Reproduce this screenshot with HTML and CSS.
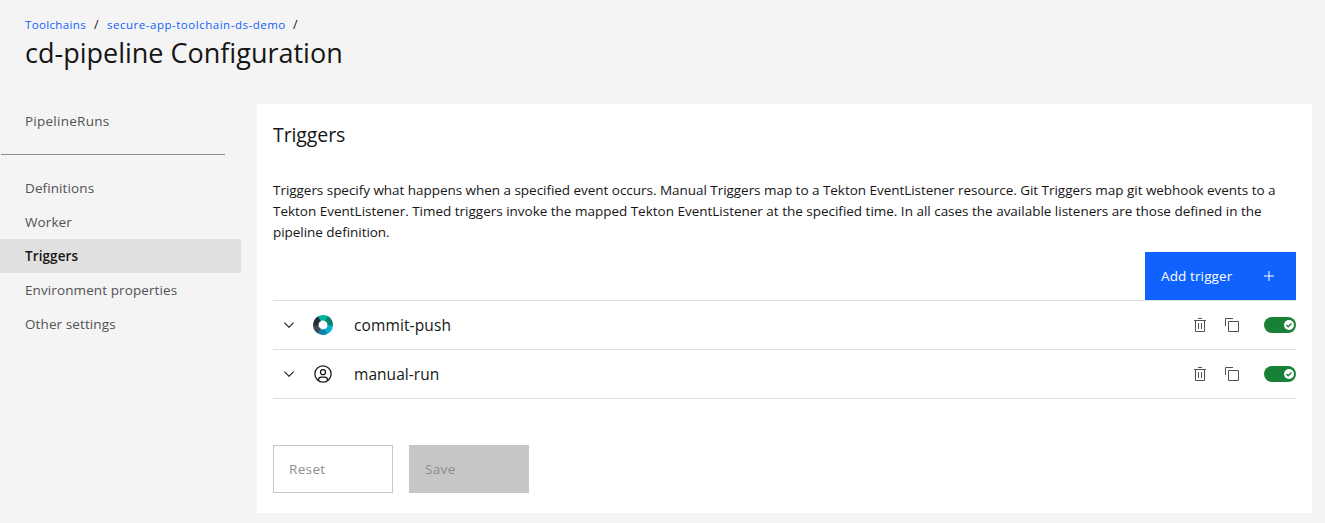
FILE: index.html
```
<!DOCTYPE html>
<html lang="en">
<head>
<meta charset="utf-8">
<title>cd-pipeline Configuration</title>
<link rel="stylesheet" href="styles.css">
</head>
<body>
<svg class="sprite" aria-hidden="true">
  <symbol id="chevron" viewBox="0 0 16 16"><path d="M8 11L3 6l.7-.7L8 9.600l4.300-4.300.7.7z"/></symbol>
  <symbol id="trash" viewBox="0 0 32 32"><path d="M12 12h2v12h-2zM18 12h2v12h-2zM4 6v2h2v20a2 2 0 0 0 2 2h16a2 2 0 0 0 2-2V8h2V6zM8 28V8h16v20zM12 2h8v2h-8z"/></symbol>
  <symbol id="copy" viewBox="0 0 32 32"><path d="M28 10v18H10V10h18m0-2H10a2 2 0 0 0-2 2v18a2 2 0 0 0 2 2h18a2 2 0 0 0 2-2V10a2 2 0 0 0-2-2zM4 18H2V4a2 2 0 0 1 2-2h14v2H4z"/></symbol>
  <symbol id="check" viewBox="0 0 6 5"><path d="M2.200 2.700L5 0l1 1-3.800 3.800L0 2.600l1-1z"/></symbol>
</svg>
<header class="page-header">
  <nav class="breadcrumb"><a class="crumb">Toolchains</a><span class="slash">/</span><a class="crumb crumb-project">secure-app-toolchain-ds-demo</a><span class="slash">/</span></nav>
  <h1 class="page-title">cd-pipeline Configuration</h1>
</header>
<div class="layout">
  <nav class="sidebar">
    <a class="nav-item nav-runs">PipelineRuns</a>
    <hr class="divider">
    <a class="nav-item">Definitions</a>
    <a class="nav-item">Worker</a>
    <a class="nav-item active">Triggers</a>
    <a class="nav-item">Environment properties</a>
    <a class="nav-item">Other settings</a>
  </nav>
  <main class="panel">
    <h2 class="panel-title">Triggers</h2>
    <p class="description">Triggers specify what happens when a specified event occurs. Manual Triggers map to a Tekton EventListener resource. Git Triggers map git webhook events to a<br><span class="line-loose">Tekton EventListener. Timed triggers invoke the mapped Tekton EventListener at the specified time. In all cases the available listeners are those defined in the</span><br>pipeline definition.</p>
    <div class="toolbar">
      <button class="add-button">Add trigger<svg class="plus" viewBox="0 0 32 32"><path d="M17 15V6h-2v9H6v2h9v9h2v-9h9v-2z"/></svg></button>
    </div>
    <ul class="trigger-list">
      <li class="trigger">
        <svg class="chevron"><use href="#chevron"/></svg>
        <svg class="kind" viewBox="0 0 20 20" fill="none" stroke-width="5.400">
          <path stroke="#00b39b" d="M4.900 4.900A7.200 7.200 0 0 1 15.600 5.400"/>
          <path stroke="#068270" d="M13.400 3.600A7.200 7.200 0 0 1 17.100 11"/>
          <path stroke="#00b2d6" d="M17.200 10.500A7.200 7.200 0 0 1 12 16.900"/>
          <path stroke="#0b80a8" d="M13 16.500A7.200 7.200 0 0 1 5.400 15.500"/>
          <path stroke="#3a4a58" d="M6.400 16.200A7.200 7.200 0 0 1 2.800 9.400"/>
          <path stroke="#21303a" d="M2.800 10.400A7.200 7.200 0 0 1 6.400 3.800"/>
        </svg>
        <span class="trigger-name">commit-push</span>
        <svg class="action"><use href="#trash"/></svg>
        <svg class="action"><use href="#copy"/></svg>
        <span class="toggle"><span class="knob"><svg class="check"><use href="#check"/></svg></span></span>
      </li>
      <li class="trigger">
        <svg class="chevron"><use href="#chevron"/></svg>
        <svg class="kind" viewBox="0 0 32 32" fill="#161616"><path d="M16 8a5 5 0 1 0 5 5 5 5 0 0 0-5-5zm0 8a3 3 0 1 1 3-3 3 3 0 0 1-3 3z"/><path d="M16 2a14 14 0 1 0 14 14A14 14 0 0 0 16 2zm-6 24.400V25a3 3 0 0 1 3-3h6a3 3 0 0 1 3 3v1.400a11.900 11.900 0 0 1-12 0zm14-1.500a5 5 0 0 0-5-4.900h-6a5 5 0 0 0-5 4.900 12 12 0 1 1 16 0z"/></svg>
        <span class="trigger-name manual">manual-run</span>
        <svg class="action"><use href="#trash"/></svg>
        <svg class="action"><use href="#copy"/></svg>
        <span class="toggle"><span class="knob"><svg class="check"><use href="#check"/></svg></span></span>
      </li>
    </ul>
    <div class="form-actions">
      <button class="form-button reset" disabled>Reset</button>
      <button class="form-button save" disabled>Save</button>
    </div>
  </main>
</div>
</body>
</html>
```
FILE: styles.css
```
* {
  box-sizing: border-box;
}

body {
  margin: 0;
  background: #f4f4f4;
  color: #161616;
  font-family: "Open Sans", sans-serif;
  font-size: 13.5px;
}

.sprite {
  display: none;
}

.page-header {
  height: 104px;
  padding: 16px 25px 0;
}

.breadcrumb {
  display: flex;
  height: 17px;
  line-height: 17px;
}

.crumb {
  width: 61px;
  color: #0f62fe;
  font-size: 11.5px;
  letter-spacing: 0.35px;
  white-space: nowrap;
}

.crumb-project {
  width: 178px;
  letter-spacing: 0.52px;
}

.slash {
  width: 21px;
  padding-left: 8px;
  font-size: 12.5px;
}

.page-title {
  margin: 0;
  font-size: 27px;
  font-weight: 400;
  line-height: 40px;
}

.layout {
  display: flex;
  align-items: flex-start;
}

.sidebar {
  width: 241px;
  margin-right: 16px;
}

.nav-item {
  display: block;
  height: 34px;
  padding-left: 25px;
  color: #525252;
  line-height: 34px;
  letter-spacing: 0.1px;
}

.nav-runs {
  letter-spacing: 0.25px;
}

.active {
  background: #e0e0e0;
  color: #161616;
  font-weight: 600;
}

.divider {
  width: 224px;
  height: 1px;
  margin: 16px 0 16px 1px;
  border: 0;
  background: #8d8d8d;
}

.panel {
  width: 1055px;
  height: 409px;
  padding: 16px;
  background: #fff;
}

.panel-title {
  margin: 0 0 30px;
  font-size: 19.5px;
  font-weight: 400;
  line-height: 30px;
  letter-spacing: -0.1px;
}

.description {
  margin: 0 0 9px;
  line-height: 21px;
  letter-spacing: -0.036px;
  white-space: nowrap;
}

.line-loose {
  letter-spacing: -0.012px;
}

.toolbar {
  display: flex;
  justify-content: flex-end;
}

.add-button {
  display: flex;
  align-items: center;
  justify-content: space-between;
  width: 151px;
  height: 48px;
  padding: 0 19px 0 16px;
  border: 0;
  background: #0f62fe;
  color: #fff;
  font: inherit;
  letter-spacing: 0.12px;
}

.plus {
  width: 16px;
  height: 16px;
  fill: #fff;
}

.trigger-list {
  margin: 0;
  padding: 0;
  border-top: 1px solid #e0e0e0;
  list-style: none;
}

.trigger {
  display: flex;
  align-items: center;
  height: 49px;
  border-bottom: 1px solid #e0e0e0;
}

.chevron {
  width: 16px;
  height: 16px;
  margin: 0 16px 0 8px;
  fill: #161616;
}

.kind {
  width: 20px;
  height: 20px;
}

.trigger-name {
  flex: 1;
  padding-left: 21px;
  font-size: 15.5px;
  letter-spacing: 0.12px;
}

.manual {
  letter-spacing: 0.05px;
}

.action {
  width: 16px;
  height: 16px;
  margin-right: 16px;
  fill: #525252;
}

.toggle {
  display: flex;
  align-items: center;
  justify-content: flex-end;
  width: 32px;
  height: 16px;
  margin-left: 8px;
  padding-right: 2px;
  border-radius: 8px;
  background: #198038;
}

.knob {
  display: flex;
  align-items: center;
  justify-content: center;
  width: 10px;
  height: 10px;
  border-radius: 50%;
  background: #fff;
}

.check {
  width: 6px;
  height: 5px;
  fill: #198038;
}

.form-actions {
  display: flex;
  gap: 16px;
  margin-top: 46px;
}

.form-button {
  width: 120px;
  height: 48px;
  padding: 0 15px;
  border: 1px solid #c6c6c6;
  color: #8d8d8d;
  font: inherit;
  letter-spacing: 0.35px;
  text-align: left;
}

.reset {
  background: #fff;
}

.save {
  background: #c6c6c6;
}
```
